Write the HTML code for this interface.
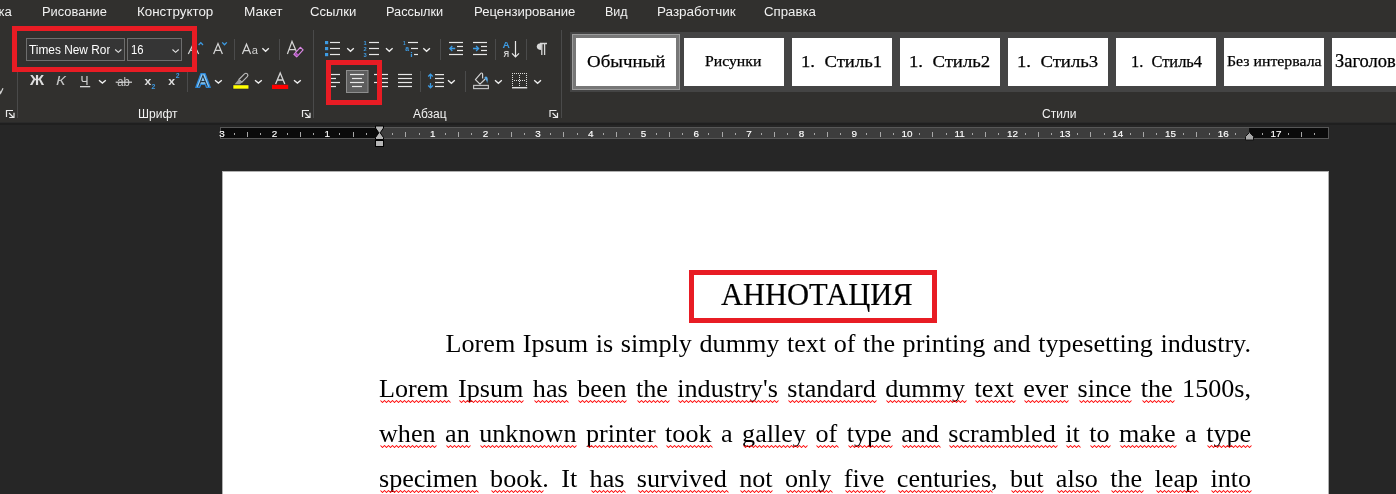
<!DOCTYPE html>
<html><head><meta charset="utf-8">
<style>
*{margin:0;padding:0;box-sizing:border-box}
html,body{width:1396px;height:494px;overflow:hidden;background:#262626}
body{position:relative;font-family:"Liberation Sans",sans-serif;color:#f0f0f0}
.a{position:absolute}
#rib{left:0;top:0;width:1396px;height:122px;background:#31302e}
.tab{position:absolute;top:3px;transform-origin:0 0;font-size:12.5px;color:#f2f2f2;white-space:nowrap;line-height:18px}
.lbl{position:absolute;top:107px;font-size:12px;color:#f2f2f2;line-height:14px;white-space:nowrap}
.sep{position:absolute;width:1px;background:#4a4a4a}
.redbox{position:absolute;border:5px solid #e81c24}
.combo{position:absolute;top:38px;height:23px;border:1px solid #6e6e6e;background:#353535;overflow:hidden;font-size:12.5px;line-height:20px;color:#fff;white-space:nowrap}
.tile{position:absolute;top:38px;height:48px;width:100px;background:#fff;color:#000;font-family:"Liberation Serif",serif;white-space:nowrap;overflow:hidden}
.tile span{position:absolute;line-height:20px;transform-origin:0 0;-webkit-text-stroke:0.25px #000}
#doc{left:0;top:122px;width:1396px;height:372px;background:#262626}
#page{left:222px;top:171px;width:1107px;height:330px;background:#fff;border:1px solid #b0b0b0}
.ln{position:absolute;left:379px;width:872px;font-family:"Liberation Serif",serif;font-size:26.13px;color:#000;text-align:justify;text-align-last:justify;white-space:nowrap;line-height:30px}
.sq{}
svg{position:absolute;left:0;top:0}
body>*{will-change:transform}
</style></head><body>
<div id="rib" class="a"></div>
<div id="doc" class="a"></div>

<!-- tabs -->
<div class="tab" style="left:-37px;transform:scaleX(1.05)">Вставка</div>
<div class="tab" style="left:42px;transform:scaleX(1.03)">Рисование</div>
<div class="tab" style="left:137px;transform:scaleX(1.07)">Конструктор</div>
<div class="tab" style="left:243.5px;transform:scaleX(1.09)">Макет</div>
<div class="tab" style="left:310px;transform:scaleX(1.05)">Ссылки</div>
<div class="tab" style="left:386px;transform:scaleX(1.02)">Рассылки</div>
<div class="tab" style="left:474px;transform:scaleX(1.05)">Рецензирование</div>
<div class="tab" style="left:605px;transform:scaleX(1.0)">Вид</div>
<div class="tab" style="left:657px;transform:scaleX(1.08)">Разработчик</div>
<div class="tab" style="left:764px;transform:scaleX(1.06)">Справка</div>

<!-- font group -->
<div class="combo" style="left:26px;width:99px"><div style="position:absolute;left:2px;top:1px;width:81px;overflow:hidden"><div style="transform:scaleX(0.95);transform-origin:0 0;width:120px">Times New Roman</div></div></div>
<div class="combo" style="left:127px;width:55px"><div style="position:absolute;left:2.5px;top:1px;transform:scaleX(0.9);transform-origin:0 0">16</div></div>

<div class="sep" style="left:17px;top:72px;height:46px"></div>
<div class="sep" style="left:313px;top:30px;height:88px"></div>
<div class="sep" style="left:561px;top:30px;height:88px"></div>
<div class="lbl" style="left:138px">Шрифт</div>
<div class="lbl" style="left:413px">Абзац</div>
<div class="lbl" style="left:1042px">Стили</div>

<!-- styles gallery -->
<div class="a" style="left:570px;top:32px;width:826px;height:60px;background:#444"></div>
<div class="a" style="left:572px;top:34px;width:108px;height:56px;background:#777;border:1px solid #9c9c9c"></div>
<div class="tile" style="left:576px"><span style="left:10.5px;top:14px;font-size:17px;transform:scaleX(1.11)">Обычный</span></div>
<div class="tile" style="left:684px"><span style="left:21px;top:13px;font-size:15px;transform:scaleX(1.05)">Рисунки</span></div>
<div class="tile" style="left:792px"><span style="left:8.5px;top:13px;font-size:17.6px;transform:scaleX(1.065)">1.&nbsp;&nbsp;Стиль1</span></div>
<div class="tile" style="left:900px"><span style="left:8.5px;top:13px;font-size:17.6px;transform:scaleX(1.065)">1.&nbsp;&nbsp;Стиль2</span></div>
<div class="tile" style="left:1008px"><span style="left:8.5px;top:13px;font-size:17.6px;transform:scaleX(1.065)">1.&nbsp;&nbsp;Стиль3</span></div>
<div class="tile" style="left:1116px"><span style="left:15px;top:13.5px;font-size:16.4px;transform:scaleX(1.0)">1.&nbsp;&nbsp;Стиль4</span></div>
<div class="tile" style="left:1224px"><span style="left:2.5px;top:13px;font-size:15.5px;transform:scaleX(1.02)">Без интервала</span></div>
<div class="tile" style="left:1332px;width:80px"><span style="left:3px;top:13px;font-size:18.5px">Заголовок 1</span></div>

<!-- ruler -->
<div class="a" style="left:0;top:122px;width:1396px;height:1px;background:#2a2a2a"></div>
<div class="a" style="left:0;top:123px;width:1396px;height:2px;background:#1f1f1f"></div>
<div class="a" style="left:220px;top:127px;width:1109px;height:12px;background:#0b0b0b;border:1px solid #575757"></div>
<div class="a" style="left:380px;top:128px;width:869px;height:10px;background:#3d3d3d"></div>
<svg width="1396" height="160" viewBox="0 0 1396 160" style="position:absolute;left:0;top:0">
<text x="221.9" y="137" text-anchor="middle" font-family="Liberation Sans" font-size="9.9" font-weight="normal" fill="#ffffff" stroke="#ffffff" stroke-width="0.15">3</text>
<text x="274.6" y="137" text-anchor="middle" font-family="Liberation Sans" font-size="9.9" font-weight="normal" fill="#ffffff" stroke="#ffffff" stroke-width="0.15">2</text>
<text x="327.3" y="137" text-anchor="middle" font-family="Liberation Sans" font-size="9.9" font-weight="normal" fill="#ffffff" stroke="#ffffff" stroke-width="0.15">1</text>
<text x="432.7" y="137" text-anchor="middle" font-family="Liberation Sans" font-size="9.9" font-weight="normal" fill="#ffffff" stroke="#ffffff" stroke-width="0.15">1</text>
<text x="485.4" y="137" text-anchor="middle" font-family="Liberation Sans" font-size="9.9" font-weight="normal" fill="#ffffff" stroke="#ffffff" stroke-width="0.15">2</text>
<text x="538.1" y="137" text-anchor="middle" font-family="Liberation Sans" font-size="9.9" font-weight="normal" fill="#ffffff" stroke="#ffffff" stroke-width="0.15">3</text>
<text x="590.8" y="137" text-anchor="middle" font-family="Liberation Sans" font-size="9.9" font-weight="normal" fill="#ffffff" stroke="#ffffff" stroke-width="0.15">4</text>
<text x="643.5" y="137" text-anchor="middle" font-family="Liberation Sans" font-size="9.9" font-weight="normal" fill="#ffffff" stroke="#ffffff" stroke-width="0.15">5</text>
<text x="696.2" y="137" text-anchor="middle" font-family="Liberation Sans" font-size="9.9" font-weight="normal" fill="#ffffff" stroke="#ffffff" stroke-width="0.15">6</text>
<text x="748.9" y="137" text-anchor="middle" font-family="Liberation Sans" font-size="9.9" font-weight="normal" fill="#ffffff" stroke="#ffffff" stroke-width="0.15">7</text>
<text x="801.6" y="137" text-anchor="middle" font-family="Liberation Sans" font-size="9.9" font-weight="normal" fill="#ffffff" stroke="#ffffff" stroke-width="0.15">8</text>
<text x="854.3" y="137" text-anchor="middle" font-family="Liberation Sans" font-size="9.9" font-weight="normal" fill="#ffffff" stroke="#ffffff" stroke-width="0.15">9</text>
<text x="907.0" y="137" text-anchor="middle" font-family="Liberation Sans" font-size="9.9" font-weight="normal" fill="#ffffff" stroke="#ffffff" stroke-width="0.15">10</text>
<text x="959.7" y="137" text-anchor="middle" font-family="Liberation Sans" font-size="9.9" font-weight="normal" fill="#ffffff" stroke="#ffffff" stroke-width="0.15">11</text>
<text x="1012.4" y="137" text-anchor="middle" font-family="Liberation Sans" font-size="9.9" font-weight="normal" fill="#ffffff" stroke="#ffffff" stroke-width="0.15">12</text>
<text x="1065.1" y="137" text-anchor="middle" font-family="Liberation Sans" font-size="9.9" font-weight="normal" fill="#ffffff" stroke="#ffffff" stroke-width="0.15">13</text>
<text x="1117.8" y="137" text-anchor="middle" font-family="Liberation Sans" font-size="9.9" font-weight="normal" fill="#ffffff" stroke="#ffffff" stroke-width="0.15">14</text>
<text x="1170.5" y="137" text-anchor="middle" font-family="Liberation Sans" font-size="9.9" font-weight="normal" fill="#ffffff" stroke="#ffffff" stroke-width="0.15">15</text>
<text x="1223.2" y="137" text-anchor="middle" font-family="Liberation Sans" font-size="9.9" font-weight="normal" fill="#ffffff" stroke="#ffffff" stroke-width="0.15">16</text>
<text x="1275.9" y="137" text-anchor="middle" font-family="Liberation Sans" font-size="9.9" font-weight="normal" fill="#ffffff" stroke="#ffffff" stroke-width="0.15">17</text>
<path d="M234 133h1v2h-1zM247 132h1v5h-1zM260 133h1v2h-1zM287 133h1v2h-1zM300 132h1v5h-1zM313 133h1v2h-1zM339 133h1v2h-1zM353 132h1v5h-1zM366 133h1v2h-1zM392 133h1v2h-1zM405 132h1v5h-1zM419 133h1v2h-1zM445 133h1v2h-1zM458 132h1v5h-1zM471 133h1v2h-1zM498 133h1v2h-1zM511 132h1v5h-1zM524 133h1v2h-1zM550 133h1v2h-1zM563 132h1v5h-1zM577 133h1v2h-1zM603 133h1v2h-1zM616 132h1v5h-1zM629 133h1v2h-1zM656 133h1v2h-1zM669 132h1v5h-1zM682 133h1v2h-1zM708 133h1v2h-1zM722 132h1v5h-1zM735 133h1v2h-1zM761 133h1v2h-1zM774 132h1v5h-1zM787 133h1v2h-1zM814 133h1v2h-1zM827 132h1v5h-1zM840 133h1v2h-1zM866 133h1v2h-1zM880 132h1v5h-1zM893 133h1v2h-1zM919 133h1v2h-1zM932 132h1v5h-1zM946 133h1v2h-1zM972 133h1v2h-1zM985 132h1v5h-1zM998 133h1v2h-1zM1025 133h1v2h-1zM1038 132h1v5h-1zM1051 133h1v2h-1zM1077 133h1v2h-1zM1090 132h1v5h-1zM1104 133h1v2h-1zM1130 133h1v2h-1zM1143 132h1v5h-1zM1156 133h1v2h-1zM1183 133h1v2h-1zM1196 132h1v5h-1zM1209 133h1v2h-1zM1235 133h1v2h-1zM1249 132h1v5h-1zM1262 133h1v2h-1zM1288 133h1v2h-1zM1301 132h1v5h-1zM1314 133h1v2h-1z" fill="#a8a8a8"/>
<path d="M375.5 126 H383.5 V128 L380.2 132.8 L383.5 137.5 V139.5 H375.5 V137.5 L378.8 132.8 L375.5 128 Z" fill="#b5b5b5" stroke="#000" stroke-width="1"/>
<rect x="375.5" y="140.5" width="8" height="6" fill="#b5b5b5" stroke="#000" stroke-width="1"/>
<path d="M1249.5 132.5 L1253.5 136.5 V140 H1245.5 V136.5 Z" fill="#a8a8a8" stroke="#111" stroke-width="1"/>
</svg>

<!-- page -->
<div id="page" class="a"></div>
<div class="redbox" style="left:689px;top:270px;width:248px;height:53px"></div>
<div class="a" style="left:721px;top:278px;font-family:'Liberation Serif',serif;font-size:30.5px;color:#000;line-height:34px;-webkit-text-stroke:0.2px #000">АННОТАЦИЯ</div>

<div class="ln" style="top:329px;padding-left:66.6px">Lorem Ipsum is simply dummy text of the printing and typesetting industry.</div>
<div class="ln" style="top:374px"><span class="sq">Lorem</span> <span class="sq">Ipsum</span> <span class="sq">has</span> <span class="sq">been</span> <span class="sq">the</span> <span class="sq">industry's</span> <span class="sq">standard</span> <span class="sq">dummy</span> <span class="sq">text</span> <span class="sq">ever</span> <span class="sq">since</span> <span class="sq">the</span> 1500s,</div>
<div class="ln" style="top:419px"><span class="sq">when</span> <span class="sq">an</span> <span class="sq">unknown</span> <span class="sq">printer</span> <span class="sq">took</span> a <span class="sq">galley</span> <span class="sq">of</span> <span class="sq">type</span> <span class="sq">and</span> <span class="sq">scrambled</span> <span class="sq">it</span> <span class="sq">to</span> <span class="sq">make</span> a <span class="sq">type</span></div>
<div class="ln" style="top:464px"><span class="sq">specimen</span> <span class="sq">book</span>. It <span class="sq">has</span> <span class="sq">survived</span> <span class="sq">not</span> <span class="sq">only</span> <span class="sq">five</span> <span class="sq">centuries</span>, <span class="sq">but</span> <span class="sq">also</span> <span class="sq">the</span> <span class="sq">leap</span> <span class="sq">into</span></div>

<svg width="1396" height="494" viewBox="0 0 1396 494" style="position:absolute;left:0;top:0"><path d="M380.5 400.5 L382.5 402.5 L384.5 400.5 L386.5 402.5 L388.5 400.5 L390.5 402.5 L392.5 400.5 L394.5 402.5 L396.5 400.5 L398.5 402.5 L400.5 400.5 L402.5 402.5 L404.5 400.5 L406.5 402.5 L408.5 400.5 L410.5 402.5 L412.5 400.5 L414.5 402.5 L416.5 400.5 L418.5 402.5 L420.5 400.5 L422.5 402.5 L424.5 400.5 L426.5 402.5 L428.5 400.5 L430.5 402.5 L432.5 400.5 L434.5 402.5 L436.5 400.5 L438.5 402.5 L440.5 400.5 L442.5 402.5 L444.5 400.5 L446.5 402.5 L448.5 400.5 L450.5 402.5 M459.5 400.5 L461.5 402.5 L463.5 400.5 L465.5 402.5 L467.5 400.5 L469.5 402.5 L471.5 400.5 L473.5 402.5 L475.5 400.5 L477.5 402.5 L479.5 400.5 L481.5 402.5 L483.5 400.5 L485.5 402.5 L487.5 400.5 L489.5 402.5 L491.5 400.5 L493.5 402.5 L495.5 400.5 L497.5 402.5 L499.5 400.5 L501.5 402.5 L503.5 400.5 L505.5 402.5 L507.5 400.5 L509.5 402.5 L511.5 400.5 L513.5 402.5 L515.5 400.5 L517.5 402.5 L519.5 400.5 L521.5 402.5 L523.5 400.5 M534.5 400.5 L536.5 402.5 L538.5 400.5 L540.5 402.5 L542.5 400.5 L544.5 402.5 L546.5 400.5 L548.5 402.5 L550.5 400.5 L552.5 402.5 L554.5 400.5 L556.5 402.5 L558.5 400.5 L560.5 402.5 L562.5 400.5 L564.5 402.5 L566.5 400.5 L568.5 402.5 M578.5 400.5 L580.5 402.5 L582.5 400.5 L584.5 402.5 L586.5 400.5 L588.5 402.5 L590.5 400.5 L592.5 402.5 L594.5 400.5 L596.5 402.5 L598.5 400.5 L600.5 402.5 L602.5 400.5 L604.5 402.5 L606.5 400.5 L608.5 402.5 L610.5 400.5 L612.5 402.5 L614.5 400.5 L616.5 402.5 L618.5 400.5 L620.5 402.5 L622.5 400.5 L624.5 402.5 L626.5 400.5 M637.5 400.5 L639.5 402.5 L641.5 400.5 L643.5 402.5 L645.5 400.5 L647.5 402.5 L649.5 400.5 L651.5 402.5 L653.5 400.5 L655.5 402.5 L657.5 400.5 L659.5 402.5 L661.5 400.5 L663.5 402.5 L665.5 400.5 L667.5 402.5 L669.5 400.5 M678.5 400.5 L680.5 402.5 L682.5 400.5 L684.5 402.5 L686.5 400.5 L688.5 402.5 L690.5 400.5 L692.5 402.5 L694.5 400.5 L696.5 402.5 L698.5 400.5 L700.5 402.5 L702.5 400.5 L704.5 402.5 L706.5 400.5 L708.5 402.5 L710.5 400.5 L712.5 402.5 L714.5 400.5 L716.5 402.5 L718.5 400.5 L720.5 402.5 L722.5 400.5 L724.5 402.5 L726.5 400.5 L728.5 402.5 L730.5 400.5 L732.5 402.5 L734.5 400.5 L736.5 402.5 L738.5 400.5 L740.5 402.5 L742.5 400.5 L744.5 402.5 L746.5 400.5 L748.5 402.5 L750.5 400.5 L752.5 402.5 L754.5 400.5 L756.5 402.5 L758.5 400.5 L760.5 402.5 L762.5 400.5 L764.5 402.5 L766.5 400.5 L768.5 402.5 L770.5 400.5 L772.5 402.5 L774.5 400.5 L776.5 402.5 L778.5 400.5 M788.5 400.5 L790.5 402.5 L792.5 400.5 L794.5 402.5 L796.5 400.5 L798.5 402.5 L800.5 400.5 L802.5 402.5 L804.5 400.5 L806.5 402.5 L808.5 400.5 L810.5 402.5 L812.5 400.5 L814.5 402.5 L816.5 400.5 L818.5 402.5 L820.5 400.5 L822.5 402.5 L824.5 400.5 L826.5 402.5 L828.5 400.5 L830.5 402.5 L832.5 400.5 L834.5 402.5 L836.5 400.5 L838.5 402.5 L840.5 400.5 L842.5 402.5 L844.5 400.5 L846.5 402.5 L848.5 400.5 L850.5 402.5 L852.5 400.5 L854.5 402.5 L856.5 400.5 L858.5 402.5 L860.5 400.5 L862.5 402.5 L864.5 400.5 L866.5 402.5 L868.5 400.5 L870.5 402.5 L872.5 400.5 L874.5 402.5 L876.5 400.5 M886.5 400.5 L888.5 402.5 L890.5 400.5 L892.5 402.5 L894.5 400.5 L896.5 402.5 L898.5 400.5 L900.5 402.5 L902.5 400.5 L904.5 402.5 L906.5 400.5 L908.5 402.5 L910.5 400.5 L912.5 402.5 L914.5 400.5 L916.5 402.5 L918.5 400.5 L920.5 402.5 L922.5 400.5 L924.5 402.5 L926.5 400.5 L928.5 402.5 L930.5 400.5 L932.5 402.5 L934.5 400.5 L936.5 402.5 L938.5 400.5 L940.5 402.5 L942.5 400.5 L944.5 402.5 L946.5 400.5 L948.5 402.5 L950.5 400.5 L952.5 402.5 L954.5 400.5 L956.5 402.5 L958.5 400.5 L960.5 402.5 L962.5 400.5 L964.5 402.5 L966.5 400.5 M975.5 400.5 L977.5 402.5 L979.5 400.5 L981.5 402.5 L983.5 400.5 L985.5 402.5 L987.5 400.5 L989.5 402.5 L991.5 400.5 L993.5 402.5 L995.5 400.5 L997.5 402.5 L999.5 400.5 L1001.5 402.5 L1003.5 400.5 L1005.5 402.5 L1007.5 400.5 L1009.5 402.5 L1011.5 400.5 L1013.5 402.5 L1015.5 400.5 M1024.5 400.5 L1026.5 402.5 L1028.5 400.5 L1030.5 402.5 L1032.5 400.5 L1034.5 402.5 L1036.5 400.5 L1038.5 402.5 L1040.5 400.5 L1042.5 402.5 L1044.5 400.5 L1046.5 402.5 L1048.5 400.5 L1050.5 402.5 L1052.5 400.5 L1054.5 402.5 L1056.5 400.5 L1058.5 402.5 L1060.5 400.5 L1062.5 402.5 L1064.5 400.5 L1066.5 402.5 L1068.5 400.5 M1079.5 400.5 L1081.5 402.5 L1083.5 400.5 L1085.5 402.5 L1087.5 400.5 L1089.5 402.5 L1091.5 400.5 L1093.5 402.5 L1095.5 400.5 L1097.5 402.5 L1099.5 400.5 L1101.5 402.5 L1103.5 400.5 L1105.5 402.5 L1107.5 400.5 L1109.5 402.5 L1111.5 400.5 L1113.5 402.5 L1115.5 400.5 L1117.5 402.5 L1119.5 400.5 L1121.5 402.5 L1123.5 400.5 L1125.5 402.5 L1127.5 400.5 L1129.5 402.5 L1131.5 400.5 M1142.5 400.5 L1144.5 402.5 L1146.5 400.5 L1148.5 402.5 L1150.5 400.5 L1152.5 402.5 L1154.5 400.5 L1156.5 402.5 L1158.5 400.5 L1160.5 402.5 L1162.5 400.5 L1164.5 402.5 L1166.5 400.5 L1168.5 402.5 L1170.5 400.5 L1172.5 402.5 L1174.5 400.5 M380.5 445.5 L382.5 447.5 L384.5 445.5 L386.5 447.5 L388.5 445.5 L390.5 447.5 L392.5 445.5 L394.5 447.5 L396.5 445.5 L398.5 447.5 L400.5 445.5 L402.5 447.5 L404.5 445.5 L406.5 447.5 L408.5 445.5 L410.5 447.5 L412.5 445.5 L414.5 447.5 L416.5 445.5 L418.5 447.5 L420.5 445.5 L422.5 447.5 L424.5 445.5 L426.5 447.5 L428.5 445.5 L430.5 447.5 L432.5 445.5 L434.5 447.5 L436.5 445.5 M446.5 445.5 L448.5 447.5 L450.5 445.5 L452.5 447.5 L454.5 445.5 L456.5 447.5 L458.5 445.5 L460.5 447.5 L462.5 445.5 L464.5 447.5 L466.5 445.5 L468.5 447.5 L470.5 445.5 M480.5 445.5 L482.5 447.5 L484.5 445.5 L486.5 447.5 L488.5 445.5 L490.5 447.5 L492.5 445.5 L494.5 447.5 L496.5 445.5 L498.5 447.5 L500.5 445.5 L502.5 447.5 L504.5 445.5 L506.5 447.5 L508.5 445.5 L510.5 447.5 L512.5 445.5 L514.5 447.5 L516.5 445.5 L518.5 447.5 L520.5 445.5 L522.5 447.5 L524.5 445.5 L526.5 447.5 L528.5 445.5 L530.5 447.5 L532.5 445.5 L534.5 447.5 L536.5 445.5 L538.5 447.5 L540.5 445.5 L542.5 447.5 L544.5 445.5 L546.5 447.5 L548.5 445.5 L550.5 447.5 L552.5 445.5 L554.5 447.5 L556.5 445.5 L558.5 447.5 L560.5 445.5 L562.5 447.5 L564.5 445.5 L566.5 447.5 L568.5 445.5 L570.5 447.5 L572.5 445.5 L574.5 447.5 L576.5 445.5 M587.5 445.5 L589.5 447.5 L591.5 445.5 L593.5 447.5 L595.5 445.5 L597.5 447.5 L599.5 445.5 L601.5 447.5 L603.5 445.5 L605.5 447.5 L607.5 445.5 L609.5 447.5 L611.5 445.5 L613.5 447.5 L615.5 445.5 L617.5 447.5 L619.5 445.5 L621.5 447.5 L623.5 445.5 L625.5 447.5 L627.5 445.5 L629.5 447.5 L631.5 445.5 L633.5 447.5 L635.5 445.5 L637.5 447.5 L639.5 445.5 L641.5 447.5 L643.5 445.5 L645.5 447.5 L647.5 445.5 L649.5 447.5 L651.5 445.5 L653.5 447.5 L655.5 445.5 L657.5 447.5 M666.5 445.5 L668.5 447.5 L670.5 445.5 L672.5 447.5 L674.5 445.5 L676.5 447.5 L678.5 445.5 L680.5 447.5 L682.5 445.5 L684.5 447.5 L686.5 445.5 L688.5 447.5 L690.5 445.5 L692.5 447.5 L694.5 445.5 L696.5 447.5 L698.5 445.5 L700.5 447.5 L702.5 445.5 L704.5 447.5 L706.5 445.5 L708.5 447.5 L710.5 445.5 L712.5 447.5 M743.5 445.5 L745.5 447.5 L747.5 445.5 L749.5 447.5 L751.5 445.5 L753.5 447.5 L755.5 445.5 L757.5 447.5 L759.5 445.5 L761.5 447.5 L763.5 445.5 L765.5 447.5 L767.5 445.5 L769.5 447.5 L771.5 445.5 L773.5 447.5 L775.5 445.5 L777.5 447.5 L779.5 445.5 L781.5 447.5 L783.5 445.5 L785.5 447.5 L787.5 445.5 L789.5 447.5 L791.5 445.5 L793.5 447.5 L795.5 445.5 L797.5 447.5 L799.5 445.5 L801.5 447.5 L803.5 445.5 L805.5 447.5 L807.5 445.5 M816.5 445.5 L818.5 447.5 L820.5 445.5 L822.5 447.5 L824.5 445.5 L826.5 447.5 L828.5 445.5 L830.5 447.5 L832.5 445.5 L834.5 447.5 L836.5 445.5 L838.5 447.5 M848.5 445.5 L850.5 447.5 L852.5 445.5 L854.5 447.5 L856.5 445.5 L858.5 447.5 L860.5 445.5 L862.5 447.5 L864.5 445.5 L866.5 447.5 L868.5 445.5 L870.5 447.5 L872.5 445.5 L874.5 447.5 L876.5 445.5 L878.5 447.5 L880.5 445.5 L882.5 447.5 L884.5 445.5 L886.5 447.5 L888.5 445.5 L890.5 447.5 L892.5 445.5 M902.5 445.5 L904.5 447.5 L906.5 445.5 L908.5 447.5 L910.5 445.5 L912.5 447.5 L914.5 445.5 L916.5 447.5 L918.5 445.5 L920.5 447.5 L922.5 445.5 L924.5 447.5 L926.5 445.5 L928.5 447.5 L930.5 445.5 L932.5 447.5 L934.5 445.5 L936.5 447.5 L938.5 445.5 L940.5 447.5 M949.5 445.5 L951.5 447.5 L953.5 445.5 L955.5 447.5 L957.5 445.5 L959.5 447.5 L961.5 445.5 L963.5 447.5 L965.5 445.5 L967.5 447.5 L969.5 445.5 L971.5 447.5 L973.5 445.5 L975.5 447.5 L977.5 445.5 L979.5 447.5 L981.5 445.5 L983.5 447.5 L985.5 445.5 L987.5 447.5 L989.5 445.5 L991.5 447.5 L993.5 445.5 L995.5 447.5 L997.5 445.5 L999.5 447.5 L1001.5 445.5 L1003.5 447.5 L1005.5 445.5 L1007.5 447.5 L1009.5 445.5 L1011.5 447.5 L1013.5 445.5 L1015.5 447.5 L1017.5 445.5 L1019.5 447.5 L1021.5 445.5 L1023.5 447.5 L1025.5 445.5 L1027.5 447.5 L1029.5 445.5 L1031.5 447.5 L1033.5 445.5 L1035.5 447.5 L1037.5 445.5 L1039.5 447.5 L1041.5 445.5 L1043.5 447.5 L1045.5 445.5 L1047.5 447.5 L1049.5 445.5 L1051.5 447.5 L1053.5 445.5 L1055.5 447.5 L1057.5 445.5 M1066.5 445.5 L1068.5 447.5 L1070.5 445.5 L1072.5 447.5 L1074.5 445.5 L1076.5 447.5 L1078.5 445.5 L1080.5 447.5 M1090.5 445.5 L1092.5 447.5 L1094.5 445.5 L1096.5 447.5 L1098.5 445.5 L1100.5 447.5 L1102.5 445.5 L1104.5 447.5 L1106.5 445.5 L1108.5 447.5 L1110.5 445.5 M1120.5 445.5 L1122.5 447.5 L1124.5 445.5 L1126.5 447.5 L1128.5 445.5 L1130.5 447.5 L1132.5 445.5 L1134.5 447.5 L1136.5 445.5 L1138.5 447.5 L1140.5 445.5 L1142.5 447.5 L1144.5 445.5 L1146.5 447.5 L1148.5 445.5 L1150.5 447.5 L1152.5 445.5 L1154.5 447.5 L1156.5 445.5 L1158.5 447.5 L1160.5 445.5 L1162.5 447.5 L1164.5 445.5 L1166.5 447.5 L1168.5 445.5 L1170.5 447.5 L1172.5 445.5 L1174.5 447.5 L1176.5 445.5 M1207.5 445.5 L1209.5 447.5 L1211.5 445.5 L1213.5 447.5 L1215.5 445.5 L1217.5 447.5 L1219.5 445.5 L1221.5 447.5 L1223.5 445.5 L1225.5 447.5 L1227.5 445.5 L1229.5 447.5 L1231.5 445.5 L1233.5 447.5 L1235.5 445.5 L1237.5 447.5 L1239.5 445.5 L1241.5 447.5 L1243.5 445.5 L1245.5 447.5 L1247.5 445.5 L1249.5 447.5 L1251.5 445.5 M380.5 490.5 L382.5 492.5 L384.5 490.5 L386.5 492.5 L388.5 490.5 L390.5 492.5 L392.5 490.5 L394.5 492.5 L396.5 490.5 L398.5 492.5 L400.5 490.5 L402.5 492.5 L404.5 490.5 L406.5 492.5 L408.5 490.5 L410.5 492.5 L412.5 490.5 L414.5 492.5 L416.5 490.5 L418.5 492.5 L420.5 490.5 L422.5 492.5 L424.5 490.5 L426.5 492.5 L428.5 490.5 L430.5 492.5 L432.5 490.5 L434.5 492.5 L436.5 490.5 L438.5 492.5 L440.5 490.5 L442.5 492.5 L444.5 490.5 L446.5 492.5 L448.5 490.5 L450.5 492.5 L452.5 490.5 L454.5 492.5 L456.5 490.5 L458.5 492.5 L460.5 490.5 L462.5 492.5 L464.5 490.5 L466.5 492.5 L468.5 490.5 L470.5 492.5 L472.5 490.5 L474.5 492.5 L476.5 490.5 L478.5 492.5 M491.5 490.5 L493.5 492.5 L495.5 490.5 L497.5 492.5 L499.5 490.5 L501.5 492.5 L503.5 490.5 L505.5 492.5 L507.5 490.5 L509.5 492.5 L511.5 490.5 L513.5 492.5 L515.5 490.5 L517.5 492.5 L519.5 490.5 L521.5 492.5 L523.5 490.5 L525.5 492.5 L527.5 490.5 L529.5 492.5 L531.5 490.5 L533.5 492.5 L535.5 490.5 L537.5 492.5 L539.5 490.5 L541.5 492.5 L543.5 490.5 M591.5 490.5 L593.5 492.5 L595.5 490.5 L597.5 492.5 L599.5 490.5 L601.5 492.5 L603.5 490.5 L605.5 492.5 L607.5 490.5 L609.5 492.5 L611.5 490.5 L613.5 492.5 L615.5 490.5 L617.5 492.5 L619.5 490.5 L621.5 492.5 L623.5 490.5 L625.5 492.5 M638.5 490.5 L640.5 492.5 L642.5 490.5 L644.5 492.5 L646.5 490.5 L648.5 492.5 L650.5 490.5 L652.5 492.5 L654.5 490.5 L656.5 492.5 L658.5 490.5 L660.5 492.5 L662.5 490.5 L664.5 492.5 L666.5 490.5 L668.5 492.5 L670.5 490.5 L672.5 492.5 L674.5 490.5 L676.5 492.5 L678.5 490.5 L680.5 492.5 L682.5 490.5 L684.5 492.5 L686.5 490.5 L688.5 492.5 L690.5 490.5 L692.5 492.5 L694.5 490.5 L696.5 492.5 L698.5 490.5 L700.5 492.5 L702.5 490.5 L704.5 492.5 L706.5 490.5 L708.5 492.5 L710.5 490.5 L712.5 492.5 L714.5 490.5 L716.5 492.5 L718.5 490.5 L720.5 492.5 L722.5 490.5 L724.5 492.5 L726.5 490.5 L728.5 492.5 M740.5 490.5 L742.5 492.5 L744.5 490.5 L746.5 492.5 L748.5 490.5 L750.5 492.5 L752.5 490.5 L754.5 492.5 L756.5 490.5 L758.5 492.5 L760.5 490.5 L762.5 492.5 L764.5 490.5 L766.5 492.5 L768.5 490.5 L770.5 492.5 L772.5 490.5 M786.5 490.5 L788.5 492.5 L790.5 490.5 L792.5 492.5 L794.5 490.5 L796.5 492.5 L798.5 490.5 L800.5 492.5 L802.5 490.5 L804.5 492.5 L806.5 490.5 L808.5 492.5 L810.5 490.5 L812.5 492.5 L814.5 490.5 L816.5 492.5 L818.5 490.5 L820.5 492.5 L822.5 490.5 L824.5 492.5 L826.5 490.5 L828.5 492.5 L830.5 490.5 L832.5 492.5 M845.5 490.5 L847.5 492.5 L849.5 490.5 L851.5 492.5 L853.5 490.5 L855.5 492.5 L857.5 490.5 L859.5 492.5 L861.5 490.5 L863.5 492.5 L865.5 490.5 L867.5 492.5 L869.5 490.5 L871.5 492.5 L873.5 490.5 L875.5 492.5 L877.5 490.5 L879.5 492.5 L881.5 490.5 L883.5 492.5 L885.5 490.5 M898.5 490.5 L900.5 492.5 L902.5 490.5 L904.5 492.5 L906.5 490.5 L908.5 492.5 L910.5 490.5 L912.5 492.5 L914.5 490.5 L916.5 492.5 L918.5 490.5 L920.5 492.5 L922.5 490.5 L924.5 492.5 L926.5 490.5 L928.5 492.5 L930.5 490.5 L932.5 492.5 L934.5 490.5 L936.5 492.5 L938.5 490.5 L940.5 492.5 L942.5 490.5 L944.5 492.5 L946.5 490.5 L948.5 492.5 L950.5 490.5 L952.5 492.5 L954.5 490.5 L956.5 492.5 L958.5 490.5 L960.5 492.5 L962.5 490.5 L964.5 492.5 L966.5 490.5 L968.5 492.5 L970.5 490.5 L972.5 492.5 L974.5 490.5 L976.5 492.5 L978.5 490.5 L980.5 492.5 L982.5 490.5 L984.5 492.5 L986.5 490.5 L988.5 492.5 L990.5 490.5 L992.5 492.5 M1011.5 490.5 L1013.5 492.5 L1015.5 490.5 L1017.5 492.5 L1019.5 490.5 L1021.5 492.5 L1023.5 490.5 L1025.5 492.5 L1027.5 490.5 L1029.5 492.5 L1031.5 490.5 L1033.5 492.5 L1035.5 490.5 L1037.5 492.5 L1039.5 490.5 L1041.5 492.5 L1043.5 490.5 M1057.5 490.5 L1059.5 492.5 L1061.5 490.5 L1063.5 492.5 L1065.5 490.5 L1067.5 492.5 L1069.5 490.5 L1071.5 492.5 L1073.5 490.5 L1075.5 492.5 L1077.5 490.5 L1079.5 492.5 L1081.5 490.5 L1083.5 492.5 L1085.5 490.5 L1087.5 492.5 L1089.5 490.5 L1091.5 492.5 L1093.5 490.5 L1095.5 492.5 L1097.5 490.5 L1099.5 492.5 M1111.5 490.5 L1113.5 492.5 L1115.5 490.5 L1117.5 492.5 L1119.5 490.5 L1121.5 492.5 L1123.5 490.5 L1125.5 492.5 L1127.5 490.5 L1129.5 492.5 L1131.5 490.5 L1133.5 492.5 L1135.5 490.5 L1137.5 492.5 L1139.5 490.5 L1141.5 492.5 L1143.5 490.5 M1156.5 490.5 L1158.5 492.5 L1160.5 490.5 L1162.5 492.5 L1164.5 490.5 L1166.5 492.5 L1168.5 490.5 L1170.5 492.5 L1172.5 490.5 L1174.5 492.5 L1176.5 490.5 L1178.5 492.5 L1180.5 490.5 L1182.5 492.5 L1184.5 490.5 L1186.5 492.5 L1188.5 490.5 L1190.5 492.5 L1192.5 490.5 L1194.5 492.5 L1196.5 490.5 L1198.5 492.5 M1211.5 490.5 L1213.5 492.5 L1215.5 490.5 L1217.5 492.5 L1219.5 490.5 L1221.5 492.5 L1223.5 490.5 L1225.5 492.5 L1227.5 490.5 L1229.5 492.5 L1231.5 490.5 L1233.5 492.5 L1235.5 490.5 L1237.5 492.5 L1239.5 490.5 L1241.5 492.5 L1243.5 490.5 L1245.5 492.5 L1247.5 490.5 L1249.5 492.5 L1251.5 490.5" stroke="#ff0000" stroke-width="1.05" fill="none" stroke-linejoin="round"/></svg>
<!-- ICONS -->
<svg width="1396" height="130" viewBox="0 0 1396 130" fill="none" stroke-linecap="butt">
<path d="M115.2 49.550000000000004 L118.3 52.35 L121.4 49.550000000000004" stroke="#e0e0e0" stroke-width="1.15"/>
<path d="M172.5 49.550000000000004 L175.6 52.35 L178.7 49.550000000000004" stroke="#e0e0e0" stroke-width="1.15"/>
<path d="M188.3 54 L193.5 43.6 L198.7 54 M190.2 50.4 H196.8" stroke="#d4d4d4" stroke-width="1.25"/>
<path d="M198.6 45 L200.8 42.6 L203 45" stroke="#3d9be3" stroke-width="1.3"/>
<path d="M213.6 54 L218 43.6 L222.4 54 M215.3 50.4 H220.7" stroke="#d4d4d4" stroke-width="1.25"/>
<path d="M222.2 42.4 L224.5 44.8 L226.8 42.4" stroke="#3d9be3" stroke-width="1.3"/>
<rect x="234" y="39" width="1" height="21" fill="#4b4b4b"/>
<path d="M242.4 54 L246.5 44.2 L250.6 54 M244 50.6 H249" stroke="#d4d4d4" stroke-width="1.25"/>
<text x="251.8" y="54" font-family="Liberation Sans" font-size="10.5" font-weight="normal" font-style="normal" fill="#d4d4d4" textLength="6.2" lengthAdjust="spacingAndGlyphs">a</text>
<path d="M262.4 48.35 L265.59999999999997 51.25 L268.79999999999995 48.35" stroke="#efefef" stroke-width="1.35"/>
<rect x="279" y="39" width="1" height="21" fill="#4b4b4b"/>
<path d="M287.4 54 L292 41.4 L296.6 52 M289.2 49.6 H295" stroke="#d4d4d4" stroke-width="1.25"/>
<path d="M293.9 54.3 L300.3 47.3 L303.1 49.9 L296.7 56.9 Z" stroke="#d987e3" stroke-width="1.2" fill="#31302e" stroke-linejoin="round"/>
<path d="M294.6 54.3 L296.3 52.5 L298.8 54.8 L297.1 56.4 Z" fill="#b458c4"/>
<text x="30" y="85" font-family="Liberation Sans" font-size="14" font-weight="bold" font-style="normal" fill="#dedede" textLength="14" lengthAdjust="spacingAndGlyphs">Ж</text>
<text x="56" y="85" font-family="Liberation Sans" font-size="13.6" font-weight="normal" font-style="italic" fill="#c4c4c4" textLength="9.6" lengthAdjust="spacingAndGlyphs">К</text>
<text x="80.4" y="85" font-family="Liberation Sans" font-size="13.6" font-weight="normal" font-style="normal" fill="#d4d4d4" textLength="8" lengthAdjust="spacingAndGlyphs">Ч</text>
<rect x="80" y="86" width="10.2" height="1.3" fill="#d4d4d4"/>
<path d="M99 80.14999999999999 L102.4 83.05 L105.8 80.14999999999999" stroke="#efefef" stroke-width="1.35"/>
<text x="117.3" y="85.8" font-family="Liberation Sans" font-size="12.5" font-weight="normal" font-style="normal" fill="#c8c8c8" textLength="12.6" lengthAdjust="spacingAndGlyphs">ab</text>
<path d="M115.7 82.2 H132" stroke="#d8d8d8" stroke-width="1.2"/>
<text x="144.4" y="85.3" font-family="Liberation Sans" font-size="11.5" font-weight="bold" font-style="normal" fill="#e0e0e0" textLength="6.8" lengthAdjust="spacingAndGlyphs">x</text>
<text x="151.6" y="89" font-family="Liberation Sans" font-size="6.8" font-weight="bold" font-style="normal" fill="#3d9be3" textLength="3.8" lengthAdjust="spacingAndGlyphs">2</text>
<text x="168.3" y="85.3" font-family="Liberation Sans" font-size="11.5" font-weight="bold" font-style="normal" fill="#e0e0e0" textLength="6.8" lengthAdjust="spacingAndGlyphs">x</text>
<text x="175.8" y="78" font-family="Liberation Sans" font-size="6.8" font-weight="bold" font-style="normal" fill="#3d9be3" textLength="3.8" lengthAdjust="spacingAndGlyphs">2</text>
<rect x="187" y="72" width="1" height="20" fill="#4b4b4b"/>
<path d="M195.8 87.4 L201 73.6 L205 73.6 L210.2 87.4 L206.4 87.4 L205.3 84.4 L200.7 84.4 L199.6 87.4 Z" stroke="#2a86d8" stroke-width="1.3" fill="#8cc8f2" stroke-linejoin="round"/>
<path d="M198.6 86.8 L202.9 75.6 L207.4 86.8 M200.6 81.6 H205.3" stroke="#26313b" stroke-width="1.05" fill="none"/>
<path d="M215 80.14999999999999 L218.4 83.05 L221.8 80.14999999999999" stroke="#efefef" stroke-width="1.35"/>
<path d="M238.9 79.5 L244.5 73.9 Q246 72.6 247.3 73.9 Q248.6 75.2 247.3 76.7 L241.7 82.3 Z" stroke="#bcbcbc" stroke-width="1.15" fill="#31302e" stroke-linejoin="round"/>
<path d="M238.6 79.6 L241.9 82.6 L239.8 84.4 L234.4 84.4 Z" fill="#9c9c9c"/>
<rect x="232.6" y="84.6" width="16.6" height="4.6" fill="#1c1c38"/>
<rect x="233.3" y="85.2" width="15.2" height="3.5" fill="#ffff00"/>
<path d="M255 80.14999999999999 L258.4 83.05 L261.8 80.14999999999999" stroke="#efefef" stroke-width="1.35"/>
<path d="M275.6 84 L280.2 73 L284.8 84 M277.3 80 H283.1" stroke="#d4d4d4" stroke-width="1.3"/>
<rect x="272" y="84.8" width="16.2" height="4.2" fill="#ff0000"/>
<path d="M294 80.14999999999999 L297.4 83.05 L300.8 80.14999999999999" stroke="#efefef" stroke-width="1.35"/>
<path d="M6.5 117 V110.5 H13" stroke="#e8e8e8" stroke-width="1.2"/>
<path d="M9 113 L13.5 117.5 M9.2 117.5 H14 V112.8" stroke="#e8e8e8" stroke-width="1.2"/>
<path d="M-1.2 89 L0.6 93.2 L3 88.2" stroke="#d4d4d4" stroke-width="1.2"/>
<path d="M302.5 117 V110.5 H309" stroke="#e8e8e8" stroke-width="1.2"/>
<path d="M305 113 L309.5 117.5 M305.2 117.5 H310 V112.8" stroke="#e8e8e8" stroke-width="1.2"/>
<path d="M550.0 117 V110.5 H556.5" stroke="#e8e8e8" stroke-width="1.2"/>
<path d="M552.5 113 L557.0 117.5 M552.7 117.5 H557.5 V112.8" stroke="#e8e8e8" stroke-width="1.2"/>
<rect x="325" y="41" width="3.2" height="3.2" fill="#3d9be3"/>
<rect x="325" y="47" width="3.2" height="3.2" fill="#3d9be3"/>
<rect x="325" y="53" width="3.2" height="3.2" fill="#3d9be3"/>
<path d="M330 42.5 H340" stroke="#e8e8e8" stroke-width="1.2"/>
<path d="M330 48.5 H340" stroke="#e8e8e8" stroke-width="1.2"/>
<path d="M330 54.5 H340" stroke="#e8e8e8" stroke-width="1.2"/>
<path d="M347.2 48.35 L350.5 51.25 L353.8 48.35" stroke="#efefef" stroke-width="1.35"/>
<text x="363.6" y="45.4" font-family="Liberation Sans" font-size="6.2" font-weight="bold" font-style="normal" fill="#3d9be3" textLength="3.2" lengthAdjust="spacingAndGlyphs">1</text>
<text x="363.6" y="51.4" font-family="Liberation Sans" font-size="6.2" font-weight="bold" font-style="normal" fill="#3d9be3" textLength="3.2" lengthAdjust="spacingAndGlyphs">2</text>
<text x="363.6" y="57.4" font-family="Liberation Sans" font-size="6.2" font-weight="bold" font-style="normal" fill="#3d9be3" textLength="3.2" lengthAdjust="spacingAndGlyphs">3</text>
<path d="M369 42.5 H379" stroke="#e8e8e8" stroke-width="1.2"/>
<path d="M369 48.5 H379" stroke="#e8e8e8" stroke-width="1.2"/>
<path d="M369 54.5 H379" stroke="#e8e8e8" stroke-width="1.2"/>
<path d="M386 48.35 L389.3 51.25 L392.6 48.35" stroke="#efefef" stroke-width="1.35"/>
<text x="403" y="45.4" font-family="Liberation Sans" font-size="6.2" font-weight="bold" font-style="normal" fill="#3d9be3" textLength="2.6" lengthAdjust="spacingAndGlyphs">1</text>
<text x="405.2" y="51.4" font-family="Liberation Sans" font-size="6.4" font-weight="bold" font-style="normal" fill="#3d9be3" textLength="3.8" lengthAdjust="spacingAndGlyphs">a</text>
<rect x="410.8" y="52" width="1.3" height="1.2" fill="#3d9be3"/>
<rect x="410.8" y="54" width="1.3" height="3" fill="#3d9be3"/>
<path d="M408 42.5 H418" stroke="#e8e8e8" stroke-width="1.2"/>
<path d="M411 48.5 H418" stroke="#e8e8e8" stroke-width="1.2"/>
<path d="M414 54.5 H418" stroke="#e8e8e8" stroke-width="1.2"/>
<path d="M423.3 48.35 L426.6 51.25 L429.90000000000003 48.35" stroke="#efefef" stroke-width="1.35"/>
<rect x="440" y="39" width="1" height="21" fill="#4b4b4b"/>
<path d="M449 42.5 H463" stroke="#e8e8e8" stroke-width="1.2"/>
<path d="M457 46.5 H463" stroke="#e8e8e8" stroke-width="1.2"/>
<path d="M457 50.5 H463" stroke="#e8e8e8" stroke-width="1.2"/>
<path d="M449 54.5 H463" stroke="#e8e8e8" stroke-width="1.2"/>
<path d="M455.2 48.5 H449.8 M452.3 46 L449.8 48.5 L452.3 51" stroke="#3d9be3" stroke-width="1.3"/>
<path d="M473 42.5 H487" stroke="#e8e8e8" stroke-width="1.2"/>
<path d="M481 46.5 H487" stroke="#e8e8e8" stroke-width="1.2"/>
<path d="M481 50.5 H487" stroke="#e8e8e8" stroke-width="1.2"/>
<path d="M473 54.5 H487" stroke="#e8e8e8" stroke-width="1.2"/>
<path d="M473 48.5 H478.6 M476.1 46 L478.6 48.5 L476.1 51" stroke="#3d9be3" stroke-width="1.3"/>
<rect x="495" y="39" width="1" height="21" fill="#4b4b4b"/>
<text x="502.6" y="48.2" font-family="Liberation Sans" font-size="9.6" font-weight="bold" font-style="normal" fill="#3d9be3" textLength="7.4" lengthAdjust="spacingAndGlyphs">A</text>
<text x="503.6" y="57.2" font-family="Liberation Sans" font-size="8.8" font-weight="bold" font-style="normal" fill="#cfcfcf" textLength="5.6" lengthAdjust="spacingAndGlyphs">Я</text>
<path d="M515.5 41 V57 M512 53.4 L515.5 57 L519 53.4" stroke="#e8e8e8" stroke-width="1.2"/>
<rect x="526" y="39" width="1" height="21" fill="#4b4b4b"/>
<path d="M540 43.5 H547 M541.8 43.5 V55 M544.6 43.5 V55" stroke="#d8d8d8" stroke-width="1.3"/>
<path d="M541.2 43.2 Q536.8 43.2 536.8 46.6 Q536.8 50 541.2 50 Z" fill="#d8d8d8"/>
<rect x="346.5" y="70.5" width="21.5" height="22" fill="#5d5d5d" stroke="#8e8e8e" stroke-width="1"/>
<path d="M328 74.5 H340" stroke="#e8e8e8" stroke-width="1.2"/>
<path d="M328 78.5 H336" stroke="#e8e8e8" stroke-width="1.2"/>
<path d="M328 82.5 H340" stroke="#e8e8e8" stroke-width="1.2"/>
<path d="M328 86.5 H336" stroke="#e8e8e8" stroke-width="1.2"/>
<path d="M350 74.5 H364" stroke="#e8e8e8" stroke-width="1.2"/>
<path d="M352 78.5 H362" stroke="#e8e8e8" stroke-width="1.2"/>
<path d="M350 82.5 H364" stroke="#e8e8e8" stroke-width="1.2"/>
<path d="M352 86.5 H362" stroke="#e8e8e8" stroke-width="1.2"/>
<path d="M374 74.5 H388" stroke="#e8e8e8" stroke-width="1.2"/>
<path d="M382 78.5 H388" stroke="#e8e8e8" stroke-width="1.2"/>
<path d="M374 82.5 H388" stroke="#e8e8e8" stroke-width="1.2"/>
<path d="M382 86.5 H388" stroke="#e8e8e8" stroke-width="1.2"/>
<path d="M398 74.5 H412" stroke="#e8e8e8" stroke-width="1.2"/>
<path d="M398 78.5 H412" stroke="#e8e8e8" stroke-width="1.2"/>
<path d="M398 82.5 H412" stroke="#e8e8e8" stroke-width="1.2"/>
<path d="M398 86.5 H412" stroke="#e8e8e8" stroke-width="1.2"/>
<rect x="420" y="71" width="1" height="21" fill="#4b4b4b"/>
<path d="M430.5 74.4 V79 M428.2 76.5 L430.5 74.2 L432.8 76.5 M430.5 83 V87.8 M428.2 85.5 L430.5 87.8 L432.8 85.5" stroke="#3d9be3" stroke-width="1.3"/>
<path d="M435 74.6 H444" stroke="#e8e8e8" stroke-width="1.2"/>
<path d="M435 78.5 H444" stroke="#e8e8e8" stroke-width="1.2"/>
<path d="M435 82.5 H444" stroke="#e8e8e8" stroke-width="1.2"/>
<path d="M435 86.5 H444" stroke="#e8e8e8" stroke-width="1.2"/>
<path d="M448 80.35 L451.4 83.25 L454.8 80.35" stroke="#efefef" stroke-width="1.35"/>
<rect x="465" y="71" width="1" height="21" fill="#4b4b4b"/>
<path d="M482.6 78.6 V74.3 Q482.6 73 481.6 73 Q480.9 73 480.4 73.8 L475.4 79.6 L480 84.2 L485.2 79" stroke="#d2d2d2" stroke-width="1.2" fill="none" stroke-linejoin="round"/>
<path d="M484.4 77.4 Q486.2 75.4 487.5 77.8 Q488.5 80 487.1 83.6 Q486.7 80.2 484.8 78.6 Z" fill="#5aaae6"/>
<rect x="473.6" y="85.4" width="14.8" height="3.2" stroke="#c4c4c4" stroke-width="1.15" fill="#383838"/>
<path d="M495 80.35 L498.4 83.25 L501.8 80.35" stroke="#efefef" stroke-width="1.35"/>
<path d="M512 73h1v1h-1zM512 75h1v1h-1zM512 77h1v1h-1zM512 79h1v1h-1zM512 81h1v1h-1zM512 83h1v1h-1zM512 85h1v1h-1zM514 73h1v1h-1zM514 80h1v1h-1zM516 73h1v1h-1zM516 80h1v1h-1zM518 73h1v1h-1zM518 80h1v1h-1zM519 75h1v1h-1zM519 77h1v1h-1zM519 79h1v1h-1zM519 81h1v1h-1zM519 83h1v1h-1zM519 85h1v1h-1zM520 73h1v1h-1zM520 80h1v1h-1zM522 73h1v1h-1zM522 80h1v1h-1zM524 73h1v1h-1zM524 80h1v1h-1zM526 73h1v1h-1zM526 75h1v1h-1zM526 77h1v1h-1zM526 79h1v1h-1zM526 81h1v1h-1zM526 83h1v1h-1zM526 85h1v1h-1z" fill="#e0e0e0" shape-rendering="crispEdges"/>
<rect x="512" y="87.1" width="15.2" height="1.3" fill="#f4f4f4"/>
<path d="M534.2 80.35 L537.6 83.25 L541.0 80.35" stroke="#efefef" stroke-width="1.35"/>
</svg>

<div class="redbox" style="left:12px;top:26px;width:185px;height:46px"></div>
<div class="redbox" style="left:326px;top:60px;width:56px;height:45px"></div>
</body></html>
